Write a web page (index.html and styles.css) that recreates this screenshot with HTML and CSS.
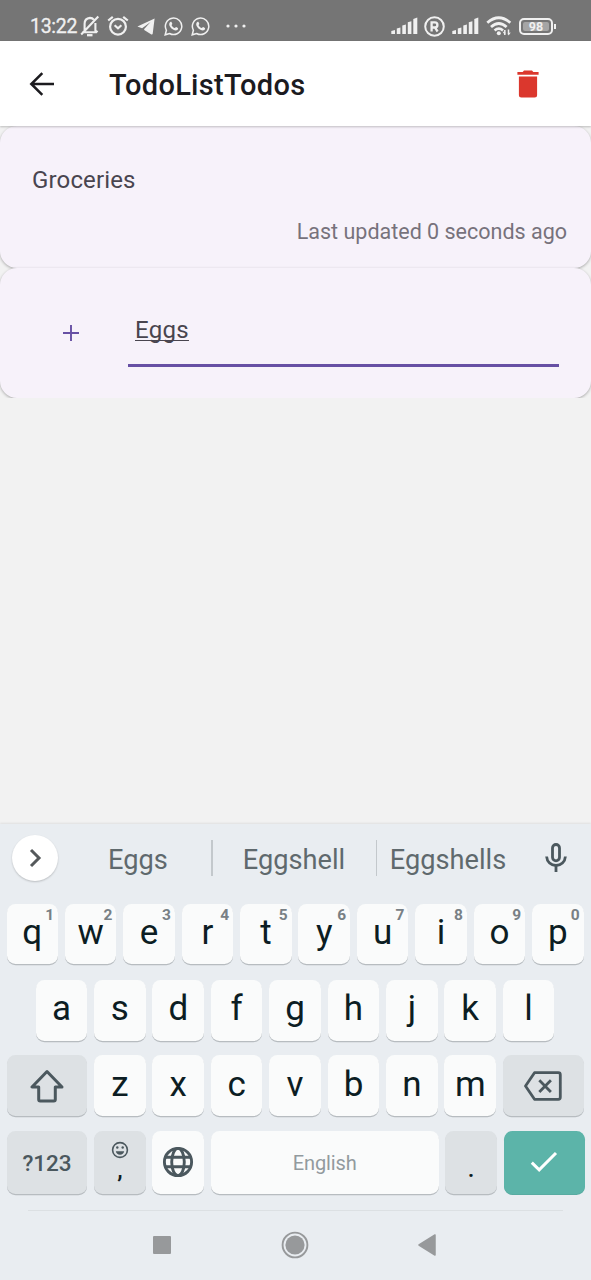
FILE: index.html
```html
<!DOCTYPE html>
<html lang="en">
<head>
<meta charset="utf-8">
<title>TodoListTodos</title>
<link rel="stylesheet" href="styles.css">
</head>
<body>
<div class="phone">
  <div class="status">
    <div class="status-left">
      <span class="clock">13:22</span>
      <svg class="ic-bell" width="20" height="22" viewBox="0 0 20 22" fill="none" stroke="#f0f0f0" stroke-width="2.100"><path d="M2.200 17.200h14.600M4.600 15.500V8.800c0-3.200 2-5.600 5.400-5.900 2 .1 3 .8 3.800 1.800M15.400 8v7.500l2.200 1.700M18.300 1.500L1.200 19.500"/><path d="M7 20.200h5.500" stroke-width="2.300"/></svg>
      <svg class="ic-alarm" width="22" height="22" viewBox="0 0 22 22" fill="none" stroke="#f0f0f0" stroke-width="2.200"><circle cx="11" cy="11.700" r="7.900"/><path d="M7.600 10.300l3.400 3 3.400-3M1.200 5.500l4.600-3.700M20.800 5.500l-4.600-3.700"/></svg>
      <svg class="ic-plane" width="18" height="17" viewBox="0 0 18 17" fill="#f0f0f0"><path d="M17.600.6L.4 8.600l4.700 1.600L13.600 4 7.200 11v1l7.200 4.500c.7.300 1.200 0 1.300-.7z"/></svg>
      <svg class="ic-wa" width="19" height="19" viewBox="0 0 19 19"><path d="M1.200 17.800l1.200-4.500a8.200 8.200 0 1 1 3.200 3.200z" fill="none" stroke="#f0f0f0" stroke-width="1.500"/><path d="M6.300 5c.5-.4 1-.3 1.200.1l.8 1.700c.1.500-.6 1-.7 1.400.7 1.400 1.800 2.400 3.200 2.900.5-.2.9-1.200 1.400-1l1.700.9c.6.500-.2 2-1.100 2.300-3.600.8-7.900-3.800-7.600-6.400.1-.8.500-1.500 1.100-1.900z" fill="#f0f0f0"/></svg>
      <svg class="ic-wa second" width="19" height="19" viewBox="0 0 19 19"><path d="M1.200 17.800l1.200-4.500a8.200 8.200 0 1 1 3.200 3.200z" fill="none" stroke="#f0f0f0" stroke-width="1.500"/><path d="M6.300 5c.5-.4 1-.3 1.200.1l.8 1.700c.1.500-.6 1-.7 1.400.7 1.400 1.800 2.400 3.200 2.900.5-.2.9-1.200 1.400-1l1.700.9c.6.500-.2 2-1.100 2.300-3.600.8-7.900-3.800-7.600-6.400.1-.8.500-1.500 1.100-1.900z" fill="#f0f0f0"/></svg>
      <svg class="ic-dots" width="20" height="4" viewBox="0 0 20 4" fill="#f0f0f0"><circle cx="2" cy="2" r="1.600"/><circle cx="10" cy="2" r="1.600"/><circle cx="18" cy="2" r="1.600"/></svg>
    </div>
    <div class="status-right">
      <svg width="27" height="18" viewBox="0 0 27 18" fill="#f0f0f0"><path d="M.3 17v-3l3.700-.9V17zM5.800 17v-5.500l3.600-1V17zM11.300 17V8.500l3.600-1V17zM16.800 17V5.200l3.600-1V17zM22.300 17V2l4-1.600V17z"/></svg>
      <svg class="ic-reg" width="21" height="21" viewBox="0 0 21 21" fill="none" stroke="#f0f0f0"><circle cx="10.500" cy="10.500" r="9.300" stroke-width="2"/><path d="M7.600 15.500v-9.200h3.200a2.600 2.600 0 0 1 0 5.200H7.600M10.900 11.400l2.700 4.100" stroke-width="2.300"/></svg>
      <svg class="ic-sig2" width="27" height="18" viewBox="0 0 27 18" fill="#f0f0f0"><path d="M.3 17v-3l3.700-.9V17zM5.800 17v-5.500l3.600-1V17zM11.300 17V8.500l3.600-1V17zM16.800 17V5.200l3.600-1V17zM22.300 17V2l4-1.600V17z"/></svg>
      <svg class="ic-wifi" width="26" height="20" viewBox="0 0 26 20" fill="none" stroke="#f0f0f0"><path d="M1.300 6.800Q12.800-3.200 24.300 6.800M5 11Q12.800 4 20.600 11M8.600 14.500Q12.800 10.800 17 14.500" stroke-width="2.800"/><circle cx="12.800" cy="17.300" r="2" fill="#f0f0f0" stroke="none"/><path d="M18.800 19v-5M22.500 13.500v5" stroke-width="1.500"/><path d="M16.500 15.500l2.300 3.500.7-2.500zM24.800 16.500l-2.300 3-.7-2.500z" fill="#f0f0f0" stroke="none"/></svg>
      <div class="battery"><span class="battery-body"><span class="battery-fill">98</span></span><span class="battery-tip"></span></div>
    </div>
  </div>

  <header class="appbar">
    <svg class="back" width="26" height="24" viewBox="0 0 26 24" fill="none" stroke="#1c1b1f" stroke-width="2.500"><path d="M25 12H2.500M13.300 1.200L2.300 12l11 10.800"/></svg>
    <h1 class="title">TodoListTodos</h1>
    <svg class="trash" width="22" height="28" viewBox="0 0 22 28" fill="#db372d"><path d="M.4 2h5.300L7 .4h8L16.300 2h5.300v2.800H.4zM1.900 6.500h18.200v18.600a2.500 2.500 0 0 1-2.500 2.500H4.400a2.500 2.500 0 0 1-2.500-2.500z"/></svg>
  </header>

  <main class="content">
    <div class="cards">
      <section class="card card-list">
        <div class="name">Groceries</div>
        <div class="updated">Last updated 0 seconds ago</div>
      </section>
      <section class="card card-new">
        <svg class="plus" width="16" height="16" viewBox="0 0 16 16" stroke="#6750a4" stroke-width="1.900"><path d="M0 8h16M8 0v16"/></svg>
        <div class="field"><span class="field-text">Eggs</span></div>
      </section>
    </div>
  </main>

  <div class="keyboard">
    <div class="suggest">
      <div class="more"><svg width="14" height="20" viewBox="0 0 14 20" fill="none" stroke="#55595b" stroke-width="3"><path d="M3 2L11 10l-8 8"/></svg></div>
      <span class="word word-a">Eggs</span>
      <i class="bar"></i>
      <span class="word word-b">Eggshell</span>
      <i class="bar"></i>
      <span class="word word-c">Eggshells</span>
      <svg class="mic" width="22" height="30" viewBox="0 0 22 30" fill="none" stroke="#4b585e" stroke-width="2.800"><rect x="7.500" y="1.500" width="7" height="16.300" rx="3.500"/><path d="M1.600 13.500c.3 5.400 4.400 9 9.400 9s9.100-3.600 9.400-9M11 22.500v6.500"/></svg>
    </div>
    <div class="row r1">
      <div class="key">q<sup>1</sup></div><div class="key">w<sup>2</sup></div><div class="key">e<sup>3</sup></div><div class="key">r<sup>4</sup></div><div class="key">t<sup>5</sup></div><div class="key">y<sup>6</sup></div><div class="key">u<sup>7</sup></div><div class="key">i<sup>8</sup></div><div class="key">o<sup>9</sup></div><div class="key">p<sup>0</sup></div>
    </div>
    <div class="row r2">
      <div class="key">a</div><div class="key">s</div><div class="key">d</div><div class="key">f</div><div class="key">g</div><div class="key">h</div><div class="key">j</div><div class="key">k</div><div class="key">l</div>
    </div>
    <div class="row r3">
      <div class="key wide gray"><svg width="34" height="34" viewBox="0 0 34 34" fill="none" stroke="#4b585e" stroke-width="3" stroke-linejoin="round"><path d="M17 2.500L2 18h6.700v12.500q0 1.500 1.500 1.500h13.600q1.500 0 1.500-1.500V18H32z"/></svg></div>
      <div class="key">z</div><div class="key">x</div><div class="key">c</div><div class="key">v</div><div class="key">b</div><div class="key">n</div><div class="key">m</div>
      <div class="key wide gray"><svg class="erase" width="38" height="30" viewBox="0 0 38 30" fill="none" stroke="#4b585e" stroke-width="2.800" stroke-linejoin="round"><path d="M10.500 1.700h23.800q2 0 2 2v22.600q0 2-2 2H10.500L1.500 15zM15.300 9.300l11.600 11.600M26.900 9.300L15.300 20.900"/></svg></div>
    </div>
    <div class="row r4">
      <div class="key wide gray sym">?123</div>
      <div class="key gray emoji"><svg width="18" height="18" viewBox="0 0 18 18" fill="none" stroke="#4b585e"><circle cx="9" cy="9" r="7.400" stroke-width="1.600"/><path d="M4.800 10.300h8.400a4.300 4.300 0 0 1-8.400 0z" fill="#4b585e" stroke="none"/><circle cx="6.300" cy="6.500" r="1.200" fill="#4b585e" stroke="none"/><circle cx="11.700" cy="6.500" r="1.200" fill="#4b585e" stroke="none"/></svg><span class="comma">,</span></div>
      <div class="key"><svg class="globe" width="32" height="32" viewBox="0 0 32 32" fill="none" stroke="#4b585e" stroke-width="2.900"><circle cx="16" cy="16" r="13.600"/><ellipse cx="16" cy="16" rx="6.300" ry="13.600"/><path d="M3.300 11.200h25.400M3.300 20.800h25.400"/></svg></div>
      <div class="key space">English</div>
      <div class="key gray dot">.</div>
      <div class="key wide enter"><svg width="28" height="22" viewBox="0 0 28 22" fill="none" stroke="#fff" stroke-width="3"><path d="M1.800 11.700l7.400 7.200L26 2"/></svg></div>
    </div>
    <div class="nav">
      <svg width="18" height="18" viewBox="0 0 18 18"><rect width="18" height="18" rx="1" fill="#97999b"/></svg>
      <svg class="home" width="28" height="28" viewBox="0 0 28 28"><circle cx="14" cy="14" r="12.400" fill="none" stroke="#97999b" stroke-width="1.900"/><circle cx="14" cy="14" r="9.600" fill="#97999b"/></svg>
      <svg class="prev" width="18" height="22" viewBox="0 0 18 22"><path d="M17 1v20L1 11z" fill="#97999b" stroke="#97999b" stroke-width="1.500" stroke-linejoin="round"/></svg>
    </div>
  </div>
</div>
</body>
</html>
```
FILE: styles.css
```css
* { box-sizing: border-box; }
body { margin: 0; font-family: Roboto, "Liberation Sans", sans-serif; }
svg { display: block; flex: none; }
.phone { width: 591px; height: 1280px; display: flex; flex-direction: column; background: #f2f2f2; overflow: hidden; }

.status { height: 41.400px; background: #757575; color: #f0f0f0; display: flex; justify-content: space-between; padding: 10px 35px 0 30px; flex: none; }
.status-left, .status-right { display: flex; align-items: center; height: 32px; }
.clock { font-size: 19.500px; font-weight: 400; width: 50px; letter-spacing: -.3px; white-space: nowrap; -webkit-text-stroke: .3px #f0f0f0; }
.ic-alarm { margin-left: 7px; }
.ic-plane { margin-left: 8px; }
.ic-wa { margin-left: 9px; }
.second { margin-left: 8px; }
.ic-dots { margin-left: 16px; }
.ic-reg { margin-left: 6px; }
.ic-sig2 { margin-left: 7px; }
.ic-wifi { margin-left: 7px; }
.battery { display: flex; align-items: center; margin-left: 7px; }
.battery-body { width: 34px; height: 17px; border: 2px solid #f0f0f0; border-radius: 5px; padding: 2px; }
.battery-fill { display: block; height: 9px; background: #a5a5a5; border-radius: 2px; font-size: 12.500px; line-height: 10px; font-weight: 700; text-align: center; }
.battery-tip { width: 2px; height: 5px; margin-left: 1px; background: #f0f0f0; }

.appbar { height: 84.600px; flex: none; background: #fff; display: flex; align-items: center; padding: 0 52px 0 29px; z-index: 1; box-shadow: 0 1px 2px rgba(0,0,0,.22); }
.title { margin: 3px 0 0 54px; font-size: 29px; font-weight: 500; line-height: 36px; letter-spacing: .3px; color: #1c1b1f; flex: 1; }

.content { flex: 1; display: flex; flex-direction: column; }
.cards { overflow: hidden; }
.card { background: #f7f2fa; border-radius: 17px; box-shadow: 0 1px 3px rgba(0,0,0,.3); }
.card-list { height: 142px; padding: 38px 24px 0 32px; }
.name { font-size: 24px; line-height: 32px; letter-spacing: .15px; color: #49454f; }
.updated { margin-top: 21px; font-size: 21.500px; line-height: 30px; letter-spacing: 0; text-align: right; color: #77727c; }
.card-new { height: 130px; display: flex; padding: 44px 32px 0 63px; }
.plus { margin-top: 13px; }
.field { margin-left: 49px; height: 55px; flex: 1; border-bottom: 3px solid #6750a4; padding: 2px 7px 0; font-size: 24px; line-height: 32px; color: #49454f; letter-spacing: .3px; }
.field-text { text-decoration: underline; text-decoration-thickness: 1px; text-underline-offset: 2px; text-decoration-skip-ink: none; }

.keyboard { height: 456px; flex: none; background: #e9edf1; box-shadow: 0 -1px 2px rgba(0,0,0,.08); }
.suggest { height: 80px; padding: 0 24px 12px 12px; display: flex; align-items: center; color: #5f696d; font-size: 27.200px; }
.more { width: 46px; height: 46px; border-radius: 50%; background: #fff; box-shadow: 0 1px 2px rgba(0,0,0,.2); display: flex; align-items: center; justify-content: center; }
.word { text-align: center; white-space: nowrap; padding-top: 3px; }
.word-a { width: 153px; padding-left: 7px; }
.word-b { width: 163px; }
.word-c { width: 142px; }
.bar { width: 1.500px; height: 36px; background: #c3c8cc; }
.mic { margin-left: 26px; }

.row { display: flex; gap: 6.800px; padding: 0 6.500px; }
.r1 { height: 75.500px; }
.r2 { height: 75.500px; padding: 0 35.700px; }
.r3 { height: 76px; }
.r4 { height: 78.500px; }
.key { flex: none; width: 51.600px; height: 60px; border-radius: 8.500px; background: #fafbfb; color: #0c1d23; font-size: 35px; line-height: 58px; display: flex; justify-content: center; position: relative; box-shadow: 0 1.200px .6px #b7bcc0; }
.r2 .key, .r3 .key { height: 61px; }
.r3 .key { line-height: 59px; }
.r4 .key { height: 62.500px; }
.key svg { align-self: center; }
.key .erase, .key .globe { margin-right: 1px; }
.key sup { position: absolute; right: 4px; top: 3px; font-size: 15.500px; line-height: 16px; font-weight: 700; color: #788085; }
.r3 .key.wide, .r4 .key.wide { width: 80.800px; }
.key.gray { background: #dde1e4; }
.key.sym { font-size: 22.500px; font-weight: 500; line-height: 65px; color: #4b585e; letter-spacing: -.1px; }
.key.emoji { flex-direction: column; justify-content: flex-start; padding-top: 10px; }
.comma { align-self: center; font-size: 24px; font-weight: 500; line-height: 22px; }
.r4 .space { flex: 1; font-size: 20px; line-height: 65px; color: #929a9e; letter-spacing: -.1px; }
.key.dot { font-size: 24px; line-height: 76px; font-weight: 500; }
.r4 .enter { background: #5cb4a9; box-shadow: 0 1px 0 #58aba1; }

.nav { margin: 0 28px; height: 70px; border-top: 1px solid #dce0e3; display: flex; align-items: center; padding-left: 125px; }
.home { margin-left: 110px; }
.prev { margin-left: 109px; }
```
